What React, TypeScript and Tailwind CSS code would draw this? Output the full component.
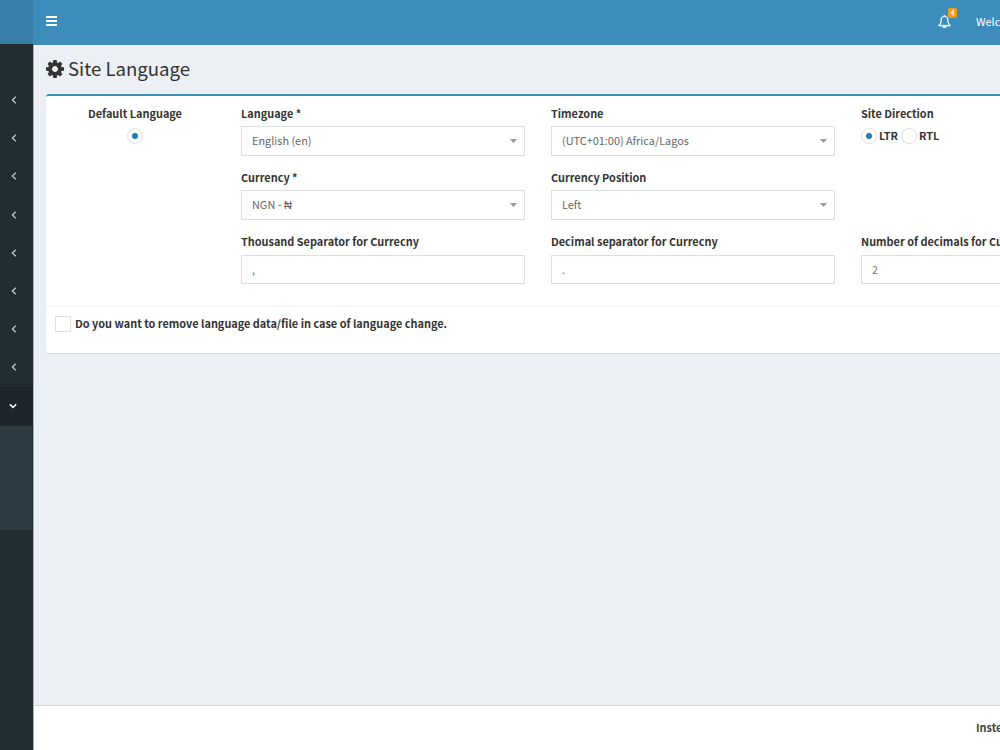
import clsx from "clsx";
import React from "react";

const menuItems = Array.from({ length: 8 }, (_, i) => i);

function ChevronLeft() {
  return (
    <svg viewBox="0 0 6 8" className="h-2 w-1.5" fill="none">
      <path d="M4.8 0.8 1.4 4l3.4 3.2" stroke="#b8c7ce" strokeWidth="1.3" />
    </svg>
  );
}

function ChevronDown() {
  return (
    <svg viewBox="0 0 8 6" className="h-1.5 w-2" fill="none">
      <path d="M0.8 1.2 4 4.4l3.2-3.2" stroke="#fff" strokeWidth="1.5" />
    </svg>
  );
}

function Sidebar() {
  return (
    <aside className="flex w-[33px] shrink-0 flex-col bg-[#222d32]">
      <div className="h-[44px] bg-[#367fa9]" />
      <ul className="mt-[37px]">
        {menuItems.map((i) => (
          <li key={i} className="flex h-[38.2px] items-center pl-[11px]">
            <ChevronLeft />
          </li>
        ))}
      </ul>
      <div className="flex h-[39px] items-center bg-[#1e282c] pl-[9px]">
        <ChevronDown />
      </div>
      <div className="mr-px h-[104px] bg-[#2c3b41]" />
    </aside>
  );
}

function Header() {
  return (
    <header className="flex h-[45px] shrink-0 items-center bg-[#3c8dbc] pb-[3px] text-white">
      <svg viewBox="0 0 11 10" className="ml-[13px] h-2.5 w-[11px]" fill="#fff">
        <path d="M0 0h11v2H0zM0 4h11v2H0zM0 8h11v2H0z" />
      </svg>
      <div className="relative ml-auto">
        <svg
          viewBox="0 0 1792 1792"
          className="h-[13px] w-[13px]"
          fill="#fff"
          stroke="#fff"
          strokeWidth="50"
        >
          <path d="M912 1696q0-16-16-16-59 0-101.500-42.500t-42.500-101.500q0-16-16-16t-16 16q0 73 51.500 124.500t124.500 51.500q16 0 16-16zm-666-288h1300q-266-300-266-832 0-51-24-105t-69-103-121.500-80.500-169.500-31.500-169.500 31.500-121.500 80.500-69 103-24 105q0 532-266 832zm1482 0q0 52-38 90t-90 38h-448q0 106-75 181t-181 75-181-75-75-181h-448q-52 0-90-38t-38-90q50-42 91-88t85-119.500 74.500-158.500 50-206 19.500-260q0-152 117-282.500t307-158.500q-8-19-8-39 0-40 28-68t68-28 68 28 28 68q0 20-8 39 190 28 307 158.500t117 282.500q0 139 19.500 260t50 206 74.500 158.500 85 119.500 91 88z" />
        </svg>
        <span className="absolute -top-[7px] left-[10px] h-[10px] w-[9px] rounded-[2px] bg-[#f39c12] text-center text-[7px] leading-[10px] font-bold">
          4
        </span>
      </div>
      <span className="ml-[25px] w-6 overflow-hidden text-[10.9px] whitespace-nowrap">
        Welcome
      </span>
    </header>
  );
}

function Radio({ checked }: { checked?: boolean }) {
  return (
    <span className="flex size-4 shrink-0 items-center justify-center rounded-full border border-[#dfdfdf] bg-white">
      {checked && <span className="size-[6px] rounded-full bg-[#1b7db0]" />}
    </span>
  );
}

function Label({ children }: { children: React.ReactNode }) {
  return (
    <label className="block h-5 text-[10.9px] leading-5 font-bold whitespace-nowrap">
      {children}
    </label>
  );
}

type FieldProps = {
  label: string;
  value: string;
  select?: boolean;
};

function Field({ label, value, select }: FieldProps) {
  return (
    <div className="h-[64.2px] w-[284px] shrink-0">
      <Label>{label}</Label>
      <div
        className={clsx(
          "flex items-center justify-between border border-[#dbdee5] pr-[7px] pl-[10px] text-[10.9px] leading-5",
          select
            ? "mt-[3px] h-[30px] text-[#666]"
            : "mt-[3.6px] h-[29px] text-[#777]",
        )}
      >
        <span className={clsx(select ? "pb-[3px]" : "pb-px")}>{value}</span>
        {select && (
          <svg viewBox="0 0 7 4" className="h-1 w-[7px]" fill="#999">
            <path d="M0 0h7L3.500 4z" />
          </svg>
        )}
      </div>
    </div>
  );
}

function LanguageBox() {
  return (
    <section className="ml-[12px] h-[259px] rounded-l-[3px] border-t-2 border-[#3c8dbc] bg-white shadow-[0_1px_1px_rgba(0,0,0,0.1)]">
      <div className="flex h-[211px] border-b border-[#f4f4f4] pt-[7px]">
        <div className="flex w-[195px] shrink-0 flex-col items-center pr-[17px]">
          <Label>Default Language</Label>
          <div className="mt-[5px]">
            <Radio checked />
          </div>
        </div>
        <div className="flex w-[310px] shrink-0 flex-col">
          <Field label="Language *" value="English (en)" select />
          <Field label="Currency *" value="NGN - ₦" select />
          <Field label="Thousand Separator for Currecny" value="," />
        </div>
        <div className="flex w-[310px] shrink-0 flex-col">
          <Field label="Timezone" value="(UTC+01:00) Africa/Lagos" select />
          <Field label="Currency Position" value="Left" select />
          <Field label="Decimal separator for Currecny" value="." />
        </div>
        <div className="flex shrink-0 flex-col">
          <div className="h-[128.4px]">
            <Label>Site Direction</Label>
            <div className="mt-[2px] flex h-[22px] items-center text-[10.9px] leading-[18px] font-bold">
              <Radio checked />
              <span className="w-[24px] pb-[3px] pl-[2px]">LTR</span>
              <Radio />
              <span className="pb-[3px] pl-[2px]">RTL</span>
            </div>
          </div>
          <Field label="Number of decimals for Currecny" value="2" />
        </div>
      </div>
      <div className="flex items-center pt-[6px] pl-[9px]">
        <span className="size-4 border border-[#dfdfdf] bg-white" />
        <span className="pb-[2px] pl-[4px] text-[10.9px] leading-5 font-bold">
          Do you want to remove language data/file in case of language change.
        </span>
      </div>
    </section>
  );
}

export default function App() {
  return (
    <div className="flex h-[750px] w-[1000px] overflow-hidden bg-[#222d32] font-['Noto_Sans_CJK_SC',sans-serif] text-[#333]">
      <Sidebar />
      <div className="flex min-w-0 flex-1 flex-col overflow-hidden bg-[#ecf0f5]">
        <Header />
        <main className="min-h-0 flex-1 border-l border-[#a9afb3]">
          <h1 className="flex h-[49px] items-center pb-[2px] pl-[12px] text-[18.6px] leading-none">
            <svg
              viewBox="128 128 1536 1536"
              className="mr-1 size-[18px]"
              fill="#333"
            >
              <path d="M1152 896q0-106-75-181t-181-75-181 75-75 181 75 181 181 75 181-75 75-181zm512-109v222q0 12-8 23t-20 13l-185 28q-19 54-39 91 35 50 107 138 10 12 10 25t-9 23q-27 37-99 108t-94 71q-12 0-26-9l-138-108q-44 23-91 38-16 136-29 186-7 28-36 28h-222q-14 0-24.500-8.500t-11.500-21.500l-28-184q-49-16-90-37l-141 107q-10 9-25 9-14 0-25-11-126-114-165-168-7-10-7-23 0-12 8-23 15-21 51-66.500t54-70.500q-27-50-41-99l-183-27q-13-2-21-12.500t-8-23.500v-222q0-12 8-23t19-13l186-28q14-46 39-92-40-57-107-138-10-12-10-24 0-10 9-23 26-36 98.500-107.500t94.500-71.500q13 0 26 10l138 107q44-23 91-38 16-136 29-186 7-28 36-28h222q14 0 24.500 8.500t11.500 21.500l28 184q49 16 90 37l142-107q9-9 24-9 13 0 25 10 129 119 165 170 7 8 7 22 0 12-8 23-15 21-51 66.500t-54 70.500q26 50 41 98l183 28q13 2 21 12.500t8 23.500z" />
            </svg>
            <span>Site Language</span>
          </h1>
          <LanguageBox />
        </main>
        <footer className="flex h-[45px] shrink-0 items-center border-t border-l border-t-[#d2d6de] border-l-[#a9afb3] bg-white pb-[2px] text-[10.9px] font-bold text-[#444]">
          <span className="ml-[942px] whitespace-nowrap">InsteadSoft</span>
        </footer>
      </div>
    </div>
  );
}
